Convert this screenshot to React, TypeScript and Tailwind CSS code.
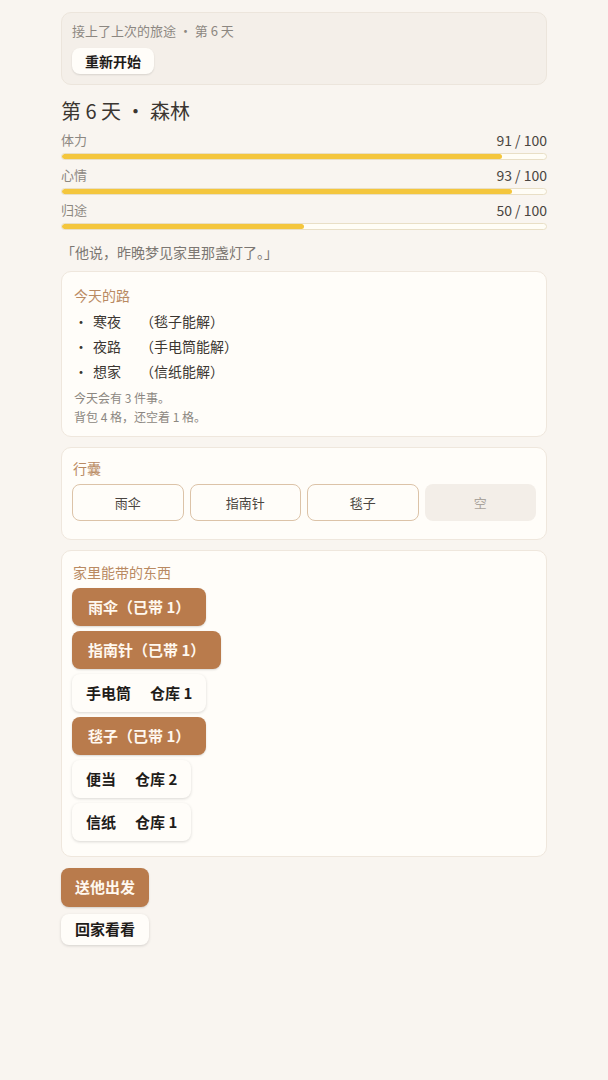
import React from "react";

const stats = [
  { label: "体力", value: 91 },
  { label: "心情", value: 93 },
  { label: "归途", value: 50 },
];

const road = [
  { name: "寒夜", hint: "（毯子能解）" },
  { name: "夜路", hint: "（手电筒能解）" },
  { name: "想家", hint: "（信纸能解）" },
];

const bag = ["雨伞", "指南针", "毯子", null];

const home = [
  { name: "雨伞", carried: true },
  { name: "指南针", carried: true },
  { name: "手电筒", stock: 1 },
  { name: "毯子", carried: true },
  { name: "便当", stock: 2 },
  { name: "信纸", stock: 1 },
];

const font = {
  fontFamily: '"Noto Sans CJK SC", "Noto Sans", sans-serif',
};

export default function App() {
  return (
    <div className="min-h-[1080px] bg-[#f9f5f0] text-[#3b3631]" style={font}>
      <div className="mx-auto w-[486px] pt-3 pb-10">
        {/* Resume banner */}
        <div className="rounded-[10px] border border-[#ece5dc] bg-[#f4efe9] px-[10px] pt-[8px] pb-[10px]">
          <p className="text-[13px] leading-[20px] text-[#8c8781]">
            接上了上次的旅途 · 第 6 天
          </p>
          <button className="mt-[7px] h-[26px] rounded-[8px] bg-[#fffdf9] px-[13px] text-[14px] font-bold text-[#1f1c19] shadow-[0_1px_2px_rgba(0,0,0,0.12)]">
            重新开始
          </button>
        </div>

        <h1 className="mt-[12px] text-[20px] leading-[28px] text-[#3b3631]">
          第 6 天 · 森林
        </h1>

        {/* Stats */}
        <div className="mt-[5px] space-y-[5px]">
          {stats.map((s) => (
            <div key={s.label}>
              <div className="flex items-center justify-between text-[13px] leading-[20px]">
                <span className="text-[#8c8781]">{s.label}</span>
                <span className="text-[14px] text-[#4a4540]">{s.value} / 100</span>
              </div>
              <div className="mt-[3px] h-[7px] overflow-hidden rounded-full border border-[#e9dfc6] bg-[#fffdf6]">
                <div
                  className="h-full rounded-full bg-[#f4c63d]"
                  style={{ width: `${s.value}%` }}
                />
              </div>
            </div>
          ))}
        </div>

        <p className="mt-[12px] text-[14px] leading-[20px] text-[#7c7772]">
          「他说，昨晚梦见家里那盏灯了。」
        </p>

        {/* Today's road */}
        <div className="mt-[9px] rounded-[10px] border border-[#efe7dd] bg-[#fffdf9] px-3 pt-[13px] pb-[10px]">
          <h2 className="text-[14px] leading-[20px] text-[#b98a62]">今天的路</h2>
          <ul className="mt-[4px]">
            {road.map((r) => (
              <li
                key={r.name}
                className="flex h-[25px] items-center text-[14px] text-[#3b3631]"
              >
                <span className="w-[19px]">•</span>
                <span className="w-[47px]">{r.name}</span>
                <span>{r.hint}</span>
              </li>
            ))}
          </ul>
          <div className="mt-[4px] text-[12px] leading-[19px] text-[#8c8781]">
            <p>今天会有 3 件事。</p>
            <p>背包 4 格，还空着 1 格。</p>
          </div>
        </div>

        {/* Bag */}
        <div className="mt-[10px] rounded-[10px] border border-[#efe7dd] bg-[#fffdf9] px-[10px] pt-[10px] pb-[18px]">
          <h2 className="pl-[1px] text-[14px] leading-[20px] text-[#b98a62]">行囊</h2>
          <div className="mt-[6px] grid grid-cols-4 gap-[6px]">
            {bag.map((b, i) =>
              b ? (
                <div
                  key={i}
                  className="flex h-[37px] items-center justify-center rounded-[8px] border border-[#dcc3a8] bg-[#fffdf9] text-[13px] text-[#4a4540]"
                >
                  {b}
                </div>
              ) : (
                <div
                  key={i}
                  className="flex h-[37px] items-center justify-center rounded-[8px] bg-[#f3eee8] text-[13px] text-[#aaa49d]"
                >
                  空
                </div>
              )
            )}
          </div>
        </div>

        {/* Home items */}
        <div className="mt-[10px] rounded-[10px] border border-[#efe7dd] bg-[#fffdf9] px-[10px] pt-[11px] pb-[15px]">
          <h2 className="pl-[1px] text-[14px] leading-[20px] text-[#b98a62]">
            家里能带的东西
          </h2>
          <div className="mt-[6px] flex flex-col items-start gap-[5px]">
            {home.map((h) =>
              h.carried ? (
                <button
                  key={h.name}
                  className="h-[38px] rounded-[8px] bg-[#b97b4c] px-[16px] text-[15px] font-bold text-[#fff8ef] shadow-[0_1px_2px_rgba(0,0,0,0.15)]"
                >
                  {h.name}（已带 1）
                </button>
              ) : (
                <button
                  key={h.name}
                  className="flex h-[38px] items-center gap-[19px] rounded-[8px] bg-[#fffdf9] px-[14px] text-[15px] font-bold text-[#1f1c19] shadow-[0_1px_3px_rgba(0,0,0,0.15)]"
                >
                  <span>{h.name}</span>
                  <span>仓库 {h.stock}</span>
                </button>
              )
            )}
          </div>
        </div>

        {/* Actions */}
        <div className="mt-[11px] flex flex-col items-start gap-[7px]">
          <button className="h-[39px] rounded-[8px] bg-[#b97b4c] px-[14px] text-[15px] font-bold text-[#fff8ef] shadow-[0_1px_2px_rgba(0,0,0,0.15)]">
            送他出发
          </button>
          <button className="h-[31px] rounded-[8px] bg-[#fffdf9] px-[14px] text-[15px] font-bold text-[#1f1c19] shadow-[0_1px_3px_rgba(0,0,0,0.15)]">
            回家看看
          </button>
        </div>
      </div>
    </div>
  );
}
